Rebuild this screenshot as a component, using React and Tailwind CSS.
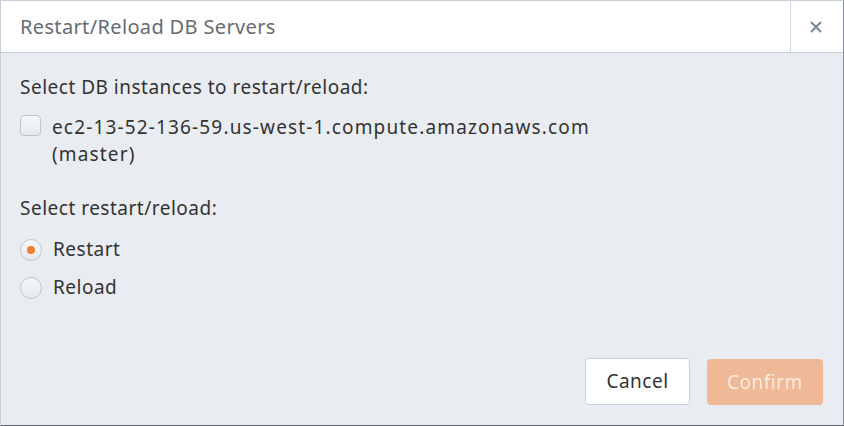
import { useState } from "react";

export default function App() {
  const [checked, setChecked] = useState(false);
  const [mode, setMode] = useState("restart");

  return (
    <div className="w-[844px] h-[426px] bg-[#e9ecf1] border border-[#c8cfd9] border-r-[#8a9099] border-b-[#5c6068] flex flex-col" style={{ fontFamily: '"Noto Sans", "Open Sans", sans-serif' }}>
      {/* Header */}
      <div className="h-[52px] bg-white border-b border-[#c8cfd9] flex items-stretch">
        <div className="flex-1 flex items-center pl-[19px] text-[20px] tracking-[0.35px] text-[#666b73]">
          Restart/Reload DB Servers
        </div>
        <button className="w-[51px] mr-[2px] border-l border-[#d3d9e2] flex items-center justify-center text-[#7b8696]">
          <svg width="12" height="12" viewBox="0 0 12 12">
            <path d="M1.5 1.5 L10.5 10.5 M10.5 1.5 L1.5 10.5" stroke="currentColor" strokeWidth="2" strokeLinecap="round" />
          </svg>
        </button>
      </div>

      {/* Body */}
      <div className="flex-1 flex flex-col px-[19px] pt-[21px] text-[19px] tracking-[0.5px] text-[#333] leading-[27px]">
        <div>Select DB instances to restart/reload:</div>

        <label className="flex items-start gap-[11px] mt-[13px]">
          <span
            onClick={() => setChecked(!checked)}
            className="mt-[1px] w-[21px] h-[21px] rounded-[4px] border border-[#bfc5ce] bg-gradient-to-b from-[#f6f7f9] to-[#e6e9ee] shrink-0"
          />
          <span className="tracking-[1.15px]">
            ec2-13-52-136-59.us-west-1.compute.amazonaws.com
            <br />
            (master)
          </span>
        </label>

        <div className="mt-[27px]">Select restart/reload:</div>

        <div className="flex flex-col gap-[11px] mt-[14px]">
          {[
            ["restart", "Restart"],
            ["reload", "Reload"],
          ].map(([key, label]) => (
            <label key={key} className="flex items-center gap-[11px]" onClick={() => setMode(key)}>
              <span className="w-[22px] h-[22px] rounded-full border border-[#bfc5ce] bg-gradient-to-b from-[#f6f7f9] to-[#e6e9ee] flex items-center justify-center shrink-0">
                {mode === key && <span className="w-[8px] h-[8px] rounded-full bg-[#ef7f2e]" />}
              </span>
              <span>{label}</span>
            </label>
          ))}
        </div>

        <div className="flex-1" />

        <div className="flex justify-end gap-[17px] pb-[20px] pr-[1px]">
          <button className="w-[105px] h-[47px] -mt-[1px] bg-white border border-[#c5d0e0] rounded-[4px] text-[#333] text-[19px] tracking-[0.5px]">
            Cancel
          </button>
          <button className="w-[116px] h-[46px] bg-[#efb896] rounded-[4px] text-[#fbeade] text-[19px] tracking-[0.5px]">
            Confirm
          </button>
        </div>
      </div>
    </div>
  );
}
